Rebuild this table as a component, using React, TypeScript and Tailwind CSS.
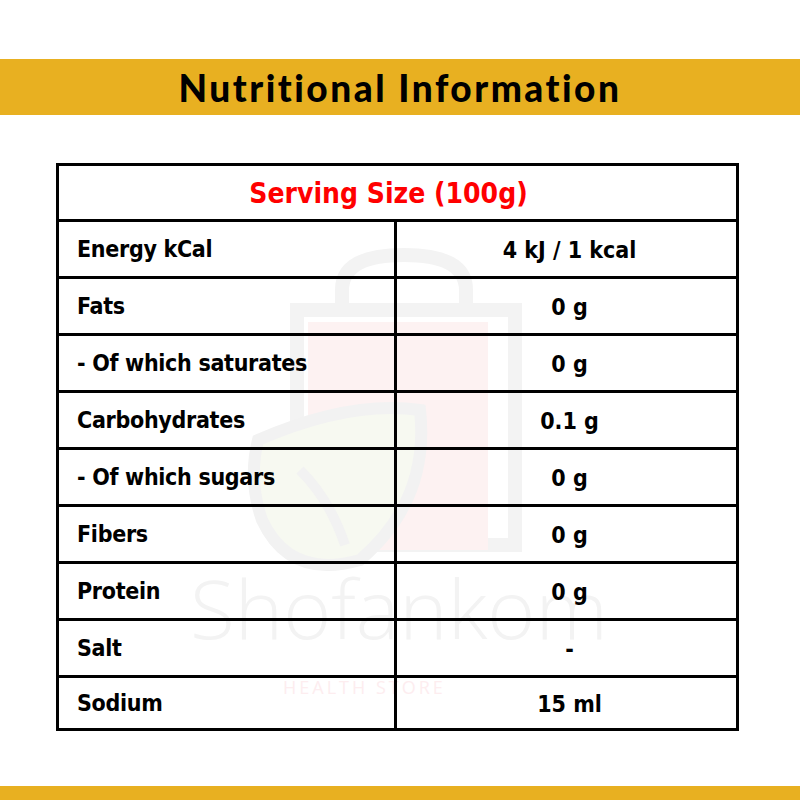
import React from "react";

const rows: [string, string][] = [
  ["Energy kCal", "4 kJ / 1 kcal"],
  ["Fats", "0 g"],
  ["- Of which saturates", "0 g"],
  ["Carbohydrates", "0.1 g"],
  ["- Of which sugars", "0 g"],
  ["Fibers", "0 g"],
  ["Protein", "0 g"],
  ["Salt", "-"],
  ["Sodium", "15 ml"],
];

function Watermark() {
  return (
    <div className="absolute left-0 top-0 w-[800px] h-[800px] pointer-events-none">
      <svg className="absolute left-0 top-0" width="800" height="800" viewBox="0 0 800 800">
        <path d="M342 310 L342 290 Q342 255 404 255 Q466 255 466 290 L466 310" fill="none" stroke="#f3f3f3" strokeWidth="14" />
        <rect x="297" y="310" width="218" height="235" fill="none" stroke="#f3f3f3" strokeWidth="14" />
        <rect x="308" y="322" width="180" height="228" fill="#fdf2f2" />
        <path d="M258 440 Q350 400 420 410 Q430 500 360 560 Q290 580 262 520 Q248 480 258 440 Z" fill="#f7f9f1" stroke="#f2f2f2" strokeWidth="12" />
        <path d="M300 470 Q330 500 345 545" fill="none" stroke="#f2f2f2" strokeWidth="10" />
      </svg>
      <div className="absolute left-[190px] top-[566px] text-[82px] leading-none text-[#f3f3f3] font-light font-['Open_Sans',sans-serif]">
        Shofankom
      </div>
      <div className="absolute left-[283px] top-[678px] text-[18px] leading-none tracking-[3px] text-[#fdedef] font-['Open_Sans',sans-serif]">
        HEALTH STORE
      </div>
    </div>
  );
}

export default function App() {
  return (
    <div className="relative w-[800px] h-[800px] bg-white overflow-hidden">
      <Watermark />
      <div className="relative flex flex-col">
        <div className="h-[59px]" />
        <div className="h-[56px] bg-[#e8b021] flex items-center justify-center">
          <span className="text-[37px] leading-none font-black text-black font-['Lato',sans-serif] tracking-[2.5px] [font-variant-ligatures:none] pt-[1px]">
            Nutritional Information
          </span>
        </div>
        <div className="h-[48px]" />
        <div className="ml-[56px] w-[683px] h-[568px] border-[3px] border-black flex flex-col font-['DejaVu_Sans_Condensed','DejaVu_Sans',sans-serif] font-bold text-black">
          <div className="h-[56px] border-b-[3px] border-black flex items-center justify-center text-[28px] text-[#ff0000] pt-[2px] pr-[18px]">
            Serving Size (100g)
          </div>
          {rows.map(([label, value], i) => (
            <div
              key={label}
              className={
                i === rows.length - 1
                  ? "h-[50px] flex"
                  : "h-[57px] border-b-[3px] border-black flex"
              }
            >
              <div className="w-[338px] border-r-[3px] border-black flex items-center pl-[18px] text-[23px] tracking-[-0.3px]">
                {label}
              </div>
              <div className="flex-1 flex items-center justify-center text-[23px] pl-[6px] pt-[3px]">
                {value}
              </div>
            </div>
          ))}
        </div>
        <div className="h-[55px]" />
        <div className="h-[14px] bg-[#e8b021]" />
      </div>
    </div>
  );
}
